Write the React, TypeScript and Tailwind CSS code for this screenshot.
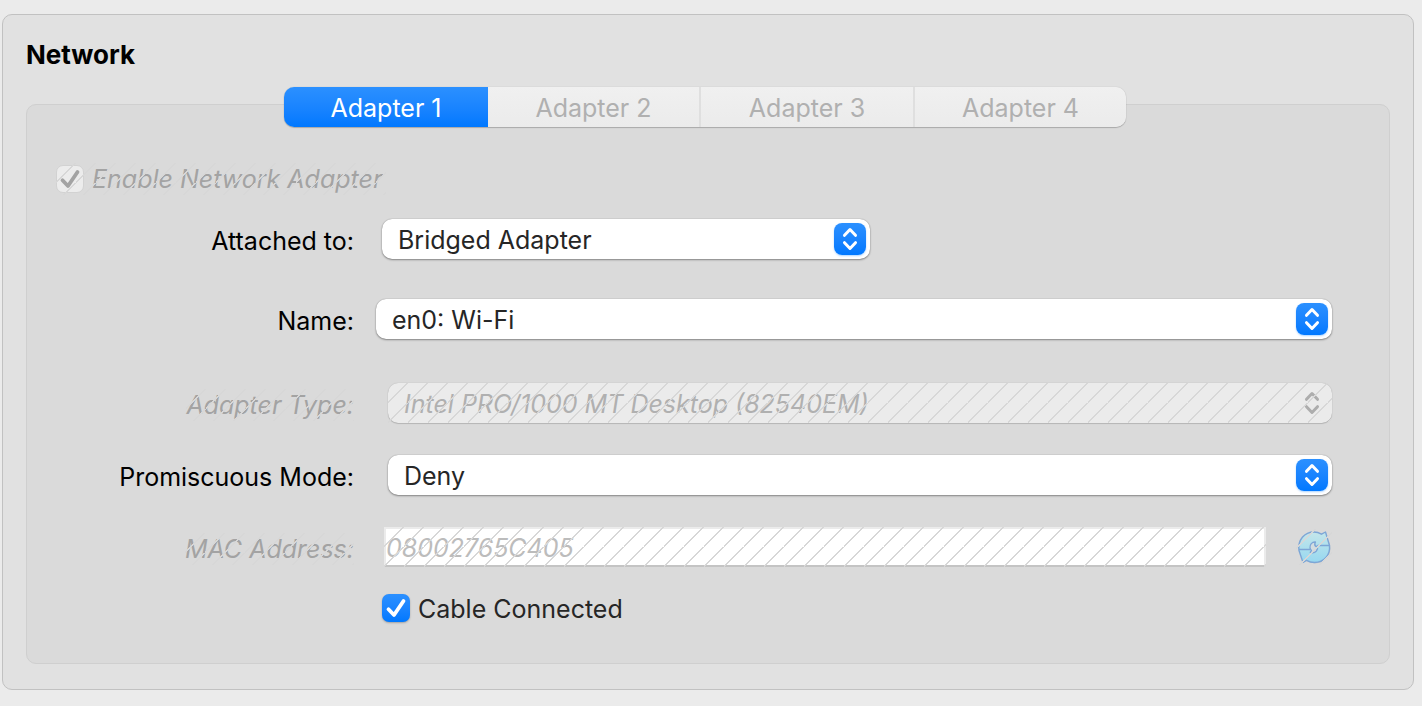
import { useState, type ReactNode } from "react";

function Hatch() {
  return (
    <span
      aria-hidden="true"
      className="pointer-events-none absolute inset-0 bg-[linear-gradient(135deg,transparent_47.5%,#d7d7d7_47.5%,#d7d7d7_52.4%,transparent_52.4%)] bg-size-[20px_20px]"
    />
  );
}

function Chevrons({ disabled = false }: { disabled?: boolean }) {
  return (
    <span
      className={`pointer-events-none absolute top-1 right-1 grid size-8 place-items-center rounded-lg ${
        disabled ? "text-[#adadad]" : "bg-linear-to-b from-[#2b90ff] to-[#0078ff] text-white shadow-[0_1px_2px_#007aff55]"
      }`}
    >
      <svg viewBox="0 0 32 32" className="size-8" fill="none" stroke="currentColor" strokeWidth="3" strokeLinecap="round" strokeLinejoin="round">
        <path d="M10.5 12.3 16 6.500l5.500 5.800M10.500 19.700 16 25.500l5.500-5.800" />
      </svg>
    </span>
  );
}

function Row({ id, label, disabled = false, gap, className = "", children }: {
  id: string;
  label: string;
  disabled?: boolean;
  gap: string;
  className?: string;
  children: ReactNode;
}) {
  return (
    <div className={`flex h-10 items-center ${gap} ${className}`}>
      <div className="flex w-[327px] shrink-0 justify-end pt-1">
        <label htmlFor={id} className={`relative ${disabled ? "text-[#a3a3a3] italic" : "text-black"}`}>
          {label}
          {disabled && <Hatch />}
        </label>
      </div>
      {children}
    </div>
  );
}

function Popup({ id, options, disabled = false, className = "flex-1" }: {
  id: string;
  options: string[];
  disabled?: boolean;
  className?: string;
}) {
  return (
    <div className={`relative h-10 ${className}`}>
      <select
        id={id}
        disabled={disabled}
        className={`block h-10 w-full appearance-none rounded-[10px] pt-0.5 pr-10 pl-4 ${
          disabled
            ? "bg-[#ebebeb] text-[#b0b0b0] italic opacity-100 shadow-[0_0_1px_#00000040,0_1px_1px_#00000026]"
            : "bg-white text-[#262626] shadow-[0_0_1px_#00000060,0_1px_2px_#00000060]"
        }`}
      >
        {options.map((o) => (
          <option key={o}>{o}</option>
        ))}
      </select>
      <Chevrons disabled={disabled} />
      {disabled && <Hatch />}
    </div>
  );
}

function Check({ id, checked, onChange, disabled = false }: {
  id: string;
  checked: boolean;
  onChange?: (v: boolean) => void;
  disabled?: boolean;
}) {
  return (
    <span className="relative grid size-7 shrink-0 place-items-center">
      <input
        id={id}
        type="checkbox"
        checked={checked}
        disabled={disabled}
        onChange={(e) => onChange?.(e.target.checked)}
        className={`size-7 appearance-none rounded-[7px] ${
          disabled
            ? "border border-[#d2d2d2] bg-[#ececec]"
            : "bg-white shadow-[0_1px_2px_#00000040] checked:bg-linear-to-b checked:from-[#2b90ff] checked:to-[#0078ff]"
        }`}
      />
      {checked && (
        <svg
          viewBox="0 0 28 28"
          className={`pointer-events-none absolute inset-0 size-7 ${disabled ? "text-[#a3a3a3]" : "text-white"}`}
          fill="none"
          stroke="currentColor"
          strokeWidth="3.800"
          strokeLinecap="round"
          strokeLinejoin="round"
        >
          <path d="m6.500 15.300 5.500 5.700 9.500-14" />
        </svg>
      )}
    </span>
  );
}

function RefreshIcon() {
  return (
    <svg viewBox="0 0 36 36" className="size-9" strokeLinejoin="round">
      <defs>
        <linearGradient id="sky" x1="0" y1="0" x2="0" y2="1">
          <stop offset="0" stopColor="#c4e6ea" />
          <stop offset="1" stopColor="#97d8f0" />
        </linearGradient>
      </defs>
      <circle cx="19.500" cy="19.500" r="15" fill="#00000014" />
      <path
        d="M3 21.500C1.500 11 8.500 3 18 3c3 0 5.500 1 7.500 2.200L29.500 3l4 13.500C34.500 26 28 33.500 18.500 33.500c-3.500 0-6-1-8-2.200L7 33.500 3 21.500Z"
        fill="url(#sky)"
        stroke="#7da6d6"
        strokeWidth="1.400"
      />
      <path
        d="M19.500 13c-3.500-.3-6 2.500-5.500 6 .3 1 .7 1.800 1.500 2.500l-1.300 1.800c2 .8 4.500.7 6.200-1.300 1.200-1.500 1.500-3.300 1-5.200l-1.600.700c-1.200-1-1.800-2-.3-4.500Z"
        fill="#d3dde0"
        stroke="#7da6d6"
        strokeWidth="1.300"
      />
      <path d="M3 20.500h11M21.500 16.500h12" fill="none" stroke="#7da6d6" strokeWidth="1.400" />
    </svg>
  );
}

const tabs = [
  { name: "Adapter 1", width: "w-51" },
  { name: "Adapter 2", width: "w-[213px]" },
  { name: "Adapter 3", width: "w-[214px]" },
  { name: "Adapter 4", width: "w-[211px]" },
];

export default function App() {
  const [cable, setCable] = useState(true);

  return (
    <main className="min-h-screen bg-[#ebebeb] pt-3.5 pr-2 pb-4 pl-0.5 font-['Inter',sans-serif] text-[25px] leading-8">
      <section className="rounded-[10px] border border-[#c1c1c1] bg-[#e1e1e1] px-[23px] pt-6 pb-[25px]">
        <h1 className="text-[26px] leading-8 font-bold text-black">Network</h1>
        <div className="mt-[33px] rounded-[10px] border border-[#cfcfcf] bg-[#dadada] pb-[38px]">
          <div role="tablist" className="relative -mt-[18px] mr-1.5 flex justify-center">
            <div className="flex rounded-[10px] shadow-[0_0_1px_#00000040,0_1px_1px_#00000033]">
              {tabs.map((tab, i) => (
                <button
                  key={tab.name}
                  type="button"
                  role="tab"
                  aria-selected={i === 0}
                  disabled={i > 0}
                  className={`h-10 pt-0.5 first:rounded-l-[10px] last:rounded-r-[10px] ${tab.width} ${
                    i === 0
                      ? "bg-linear-to-b from-[#2b90ff] to-[#0078ff] text-white"
                      : "border-r-2 border-[#dfdfdf] bg-linear-to-b from-[#f0f0f0] to-[#ebebeb] text-[#b0b0b0] last:border-r-0"
                  }`}
                >
                  {tab.name}
                </button>
              ))}
            </div>
          </div>

          <form className="pt-9 pr-[57px]">
            <div className="ml-[29px] flex">
              <div className="relative flex items-center gap-2 pr-1">
                <Check id="enable" checked disabled />
                <label htmlFor="enable" className="text-[#a3a3a3] italic">
                  Enable Network Adapter
                </label>
                <Hatch />
              </div>
            </div>

            <Row id="attached" label="Attached to:" gap="gap-7" className="mt-6">
              <Popup id="attached" options={["Bridged Adapter", "NAT", "Internal Network", "Host-only Adapter"]} className="w-122" />
            </Row>
            <Row id="name" label="Name:" gap="gap-[22px]" className="mt-10">
              <Popup id="name" options={["en0: Wi-Fi"]} />
            </Row>
            <Row id="type" label="Adapter Type:" disabled gap="gap-[34px]" className="mt-11">
              <Popup id="type" options={["Intel PRO/1000 MT Desktop (82540EM)"]} disabled />
            </Row>
            <Row id="mode" label="Promiscuous Mode:" gap="gap-[34px]" className="mt-8">
              <Popup id="mode" options={["Deny", "Allow VMs", "Allow All"]} />
            </Row>
            <Row id="mac" label="MAC Address:" disabled gap="gap-[30px]" className="mt-8">
              <div className="relative flex-1">
                <input
                  id="mac"
                  type="text"
                  disabled
                  defaultValue="08002765C405"
                  className="block h-10 w-full border-2 border-[#ebebeb] border-b-[#c4c4c4] bg-white pt-0.5 text-[#bcbcbc] italic"
                />
                <Hatch />
              </div>
              <button type="button" disabled aria-label="Generate a new MAC address" className="relative">
                <RefreshIcon />
                <Hatch />
              </button>
            </Row>
            <div className="mt-6 ml-[355px] flex items-center gap-2">
              <Check id="cable" checked={cable} onChange={setCable} />
              <label htmlFor="cable" className="pt-0.5 text-[#262626]">
                Cable Connected
              </label>
            </div>
          </form>
        </div>
      </section>
    </main>
  );
}
